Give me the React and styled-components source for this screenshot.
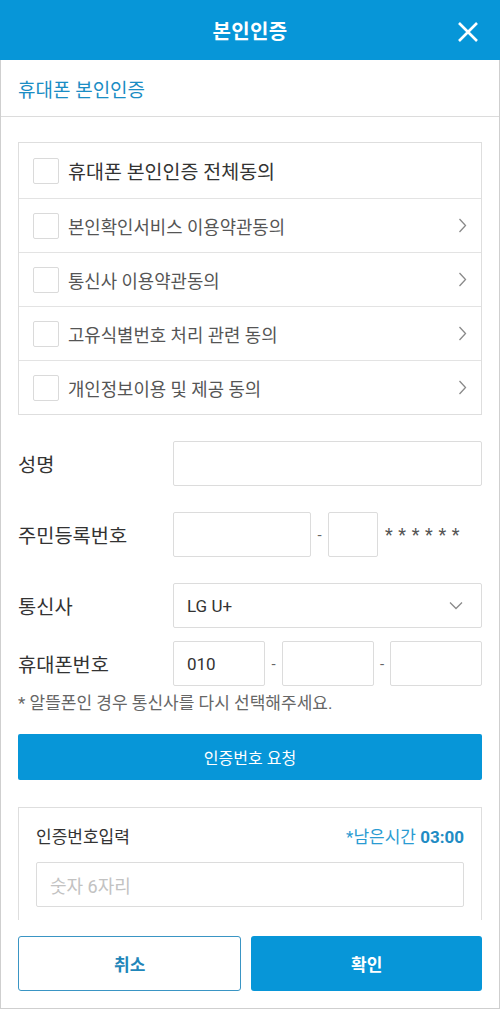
import React from 'react';
import styled, { createGlobalStyle } from 'styled-components';

const GlobalStyle = createGlobalStyle`
  html, body {
    margin: 0;
    padding: 0;
    background: #fff;
  }
  body {
    font-family: Roboto, 'Noto Sans CJK KR', sans-serif;
    color: #333;
  }
  * {
    box-sizing: border-box;
  }
`;

const BLUE = '#0796d8';

const Page = styled.div`
  display: flex;
  flex-direction: column;
  width: 500px;
  height: 1009px;
`;

const Header = styled.header`
  position: relative;
  display: flex;
  align-items: center;
  justify-content: center;
  flex: 0 0 60px;
  background: ${BLUE};
  color: #fff;
  font-size: 20px;
  font-weight: 700;
  letter-spacing: 0.3px;
`;

const CloseButton = styled.button`
  position: absolute;
  top: 18px;
  right: 18px;
  width: 28px;
  height: 28px;
  padding: 0;
  border: 0;
  background: none;
  color: #fff;
  cursor: pointer;
`;

const Body = styled.div`
  display: flex;
  flex-direction: column;
  flex: 1;
  min-height: 0;
  border: 1px solid #cfcfcf;
  border-top: 0;
`;

const Scroll = styled.div`
  flex: 1;
  min-height: 0;
  overflow: hidden;
`;

const SubTitle = styled.h2`
  margin: 0;
  padding: 0 17px;
  height: 57px;
  display: flex;
  align-items: center;
  border-bottom: 1px solid #dcdcdc;
  color: #1a8dc4;
  font-size: 19px;
  font-weight: 400;
`;

const Content = styled.div`
  padding: 25px 17px 0;
`;

const AgreeBox = styled.ul`
  margin: 0;
  padding: 0;
  list-style: none;
  border: 1px solid #dedede;
`;

const AgreeRow = styled.li`
  display: flex;
  align-items: center;
  height: ${({ $first }) => ($first ? '55px' : '54px')};
  padding: 0 14px 0 14px;
  border-top: ${({ $first }) => ($first ? '0' : '1px solid #e3e3e3')};
  color: ${({ $first }) => ($first ? '#333' : '#555')};
  font-size: ${({ $first }) => ($first ? '19.5px' : '17.8px')};
`;

const Check = styled.span`
  flex: 0 0 26px;
  height: 26px;
  margin-right: 9px;
  border: 1px solid #dadada;
  border-radius: 2px;
  background: #fff;
`;

const AgreeText = styled.span`
  flex: 1;
`;

const Field = styled.div`
  display: flex;
  align-items: center;
  margin-top: ${({ $gap }) => $gap}px;
`;

const Label = styled.label`
  flex: 0 0 155px;
  font-size: 19.8px;
  color: #333;
`;

const Controls = styled.div`
  display: flex;
  align-items: center;
  flex: 1;
`;

const Input = styled.div`
  display: flex;
  align-items: center;
  height: 45px;
  padding: 0 13px;
  flex: ${({ $w }) => ($w ? `0 0 ${$w}px` : '1')};
  border: 1px solid #dcdcdc;
  border-radius: 2px;
  background: #fff;
  font-size: 17px;
  color: #333;
`;

const Dash = styled.span`
  flex: 0 0 ${({ $w }) => $w}px;
  text-align: center;
  color: #666;
  font-size: 15px;
`;

const Stars = styled.span`
  margin-left: 7px;
  font-size: 18px;
  letter-spacing: 5.6px;
  color: #555;
`;

const SelectBox = styled(Input)`
  justify-content: space-between;
  padding-right: 18px;
`;

const Note = styled.p`
  margin: 5px 0 0;
  font-size: 17px;
  line-height: 24px;
  color: #666;
`;

const PrimaryButton = styled.button`
  display: block;
  width: 100%;
  height: 46px;
  margin-top: 19px;
  border: 0;
  border-radius: 2px;
  background: ${BLUE};
  color: #fff;
  font-family: inherit;
  font-size: 16px;
  cursor: pointer;
`;

const CertBox = styled.div`
  margin-top: 27px;
  padding: 15px 17px 0;
  border: 1px solid #dedede;
  border-bottom: 0;
`;

const CertHead = styled.div`
  display: flex;
  align-items: center;
  justify-content: space-between;
  font-size: 17px;
  color: #333;
`;

const Timer = styled.span`
  color: #2a9bd2;
  font-size: 17px;

  b {
    font-weight: 700;
    color: #1f8cc4;
  }
`;

const CertInput = styled(Input)`
  margin-top: 14px;
  color: #c2c2c2;
  font-size: 18px;
`;

const CertNote = styled.p`
  margin: 9px 0 0;
  font-size: 14px;
  color: #c4c4c4;
  white-space: nowrap;
`;

const Footer = styled.footer`
  display: flex;
  gap: 10px;
  flex: 0 0 88px;
  padding: 16px 17px 17px;
  background: #fff;
`;

const FootButton = styled.button`
  flex: ${({ $grow }) => $grow};
  height: 55px;
  border: ${({ $outline }) => ($outline ? '1.5px solid #3a95c4' : '0')};
  border-radius: 3px;
  background: ${({ $outline }) => ($outline ? '#fff' : BLUE)};
  color: ${({ $outline }) => ($outline ? '#1f86b9' : '#fff')};
  font-family: inherit;
  font-size: 17px;
  font-weight: 700;
  cursor: pointer;
`;

const Chevron = ({ down }) => (
  <svg width={down ? 14 : 9} height={down ? 9 : 15} viewBox={down ? '0 0 14 9' : '0 0 9 15'} fill="none">
    <path
      d={down ? 'M1 1.5l6 6 6-6' : 'M1.5 1l6 6.5-6 6.5'}
      stroke="#8a8a8a"
      strokeWidth="1.3"
    />
  </svg>
);

const agreements = [
  '본인확인서비스 이용약관동의',
  '통신사 이용약관동의',
  '고유식별번호 처리 관련 동의',
  '개인정보이용 및 제공 동의',
];

export default function App() {
  return (
    <Page>
      <GlobalStyle />
      <Header>
        본인인증
        <CloseButton aria-label="닫기">
          <svg width="28" height="28" viewBox="0 0 28 28">
            <path d="M5 5l18 18M23 5L5 23" stroke="#fff" strokeWidth="2.6" />
          </svg>
        </CloseButton>
      </Header>
      <Body>
        <Scroll>
          <SubTitle>휴대폰 본인인증</SubTitle>
          <Content>
            <AgreeBox>
              <AgreeRow $first>
                <Check />
                <AgreeText>휴대폰 본인인증 전체동의</AgreeText>
              </AgreeRow>
              {agreements.map((text) => (
                <AgreeRow key={text}>
                  <Check />
                  <AgreeText>{text}</AgreeText>
                  <Chevron />
                </AgreeRow>
              ))}
            </AgreeBox>

            <Field $gap={26}>
              <Label>성명</Label>
              <Controls>
                <Input />
              </Controls>
            </Field>

            <Field $gap={26}>
              <Label>주민등록번호</Label>
              <Controls>
                <Input $w={138} />
                <Dash $w={17}>-</Dash>
                <Input $w={50} />
                <Stars>******</Stars>
              </Controls>
            </Field>

            <Field $gap={26}>
              <Label>통신사</Label>
              <Controls>
                <SelectBox>
                  LG U+
                  <Chevron down />
                </SelectBox>
              </Controls>
            </Field>

            <Field $gap={13}>
              <Label>휴대폰번호</Label>
              <Controls>
                <Input>010</Input>
                <Dash $w={17}>-</Dash>
                <Input />
                <Dash $w={16}>-</Dash>
                <Input />
              </Controls>
            </Field>

            <Note>* 알뜰폰인 경우 통신사를 다시 선택해주세요.</Note>

            <PrimaryButton>인증번호 요청</PrimaryButton>

            <CertBox>
              <CertHead>
                인증번호입력
                <Timer>
                  *남은시간 <b>03:00</b>
                </Timer>
              </CertHead>
              <CertInput>숫자 6자리</CertInput>
              <CertNote>* 인증번호가 발송되지 않는 경우 입력하신 정보가 정확한지 확인해주세요.</CertNote>
            </CertBox>
          </Content>
        </Scroll>
        <Footer>
          <FootButton $outline $grow="222">취소</FootButton>
          <FootButton $grow="232">확인</FootButton>
        </Footer>
      </Body>
    </Page>
  );
}
